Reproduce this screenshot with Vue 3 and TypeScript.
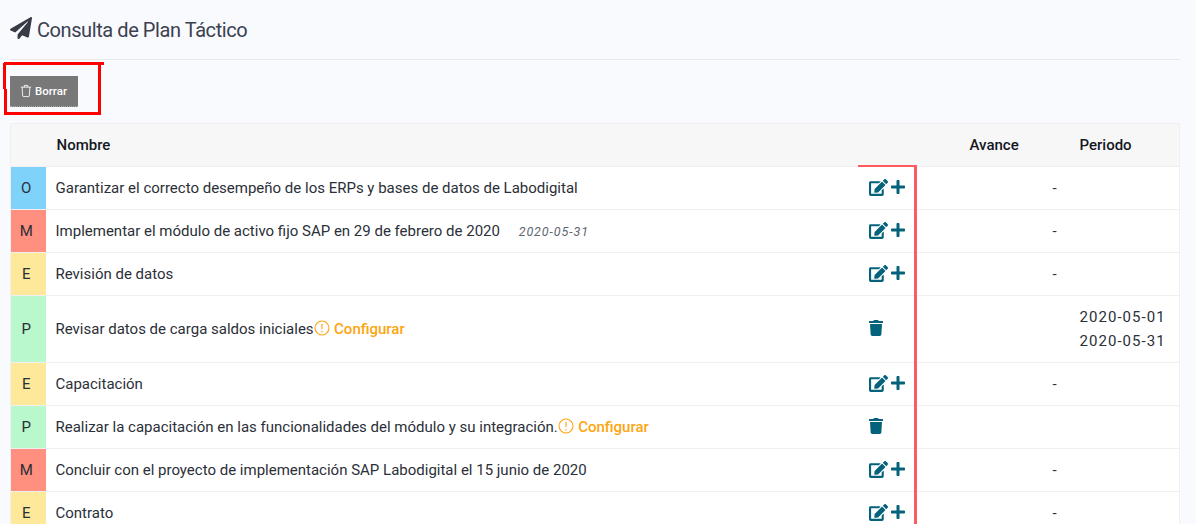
<script setup lang="ts">
interface Row {
  tipo: string;
  color: string;
  nombre: string;
  fecha?: string;
  configurar?: boolean;
  avance?: string;
  periodo?: string[];
  tall?: boolean;
}

const rows: Row[] = [
  { tipo: 'O', color: '#7fd3fb', nombre: 'Garantizar el correcto desempeño de los ERPs y bases de datos de Labodigital', avance: '-' },
  { tipo: 'M', color: '#ff8f7e', nombre: 'Implementar el módulo de activo fijo SAP en 29 de febrero de 2020', fecha: '2020-05-31', avance: '-' },
  { tipo: 'E', color: '#fee89a', nombre: 'Revisión de datos', avance: '-' },
  { tipo: 'P', color: '#b9f8cc', nombre: 'Revisar datos de carga saldos iniciales', configurar: true, periodo: ['2020-05-01', '2020-05-31'], tall: true },
  { tipo: 'E', color: '#fee89a', nombre: 'Capacitación', avance: '-' },
  { tipo: 'P', color: '#b9f8cc', nombre: 'Realizar la capacitación en las funcionalidades del módulo y su integración.', configurar: true },
  { tipo: 'M', color: '#ff8f7e', nombre: 'Concluir con el proyecto de implementación SAP Labodigital el 15 junio de 2020', avance: '-' },
  { tipo: 'E', color: '#fee89a', nombre: 'Contrato', avance: '-' }
];
</script>

<template>
  <div class="page">
    <header class="page-title">
      <svg class="plane" viewBox="0 0 512 512" aria-hidden="true">
        <path d="M476 3.2L12.5 270.6c-18.1 10.4-15.8 35.6 2.2 43.2L121 358.4l287.3-253.2c5.5-4.9 13.3 2.6 8.6 8.3L176 407v80.5c0 23.6 28.5 32.9 42.5 15.8L282 426l124.6 52.2c14.2 6 30.4-2.9 33-18.2l72-432C515 7.8 493.3-6.8 476 3.2z" />
      </svg>
      <h1>Consulta de Plan Táctico</h1>
    </header>

    <div class="toolbar">
      <button class="btn-borrar" type="button">
        <svg class="trash-line" viewBox="0 0 14 16" aria-hidden="true">
          <path d="M1 3.5h12M5 3.5V1.5h4v2M2.5 3.5l.6 10.2c0 .5.4.8.8.8h6.2c.4 0 .8-.3.8-.8l.6-10.2" />
        </svg>
        Borrar
      </button>
      <span class="mark mark-box"></span>
      <span class="mark mark-tail"></span>
    </div>

    <div class="table-wrap">
      <table>
        <colgroup>
          <col class="c-tipo" />
          <col />
          <col class="c-acciones" />
          <col class="c-avance" />
          <col class="c-periodo" />
        </colgroup>
        <thead>
          <tr>
            <th></th>
            <th>Nombre</th>
            <th></th>
            <th class="th-flush">Avance</th>
            <th class="th-flush">Periodo</th>
          </tr>
        </thead>
        <tbody>
          <tr v-for="row in rows" :key="row.nombre" :class="{ tall: row.tall }">
            <td class="tipo" :style="{ background: row.color }">{{ row.tipo }}</td>
            <td class="nombre">
              {{ row.nombre }}
              <em v-if="row.fecha">{{ row.fecha }}</em>
              <span v-if="row.configurar" class="config">
                <svg viewBox="0 0 16 16" aria-hidden="true">
                  <circle cx="8" cy="8" r="7" />
                  <path d="M8 3.8v5.4M8 11v1.4" />
                </svg>
                Configurar
              </span>
            </td>
            <td class="acciones">
              <template v-if="row.configurar">
                <svg class="ic-trash" viewBox="0 0 448 512" aria-hidden="true">
                  <path d="M432 32H312l-9.4-18.7A24 24 0 0 0 281.1 0H166.8a23.72 23.72 0 0 0-21.4 13.3L136 32H16A16 16 0 0 0 0 48v32a16 16 0 0 0 16 16h416a16 16 0 0 0 16-16V48a16 16 0 0 0-16-16zM53.2 467a48 48 0 0 0 47.9 45h245.8a48 48 0 0 0 47.9-45L416 128H32z" />
                </svg>
              </template>
              <template v-else>
                <svg class="ic-edit" viewBox="0 0 576 512" aria-hidden="true">
                  <path d="M402.6 83.2l90.2 90.2c3.8 3.8 3.8 10 0 13.8L274.4 405.6l-92.8 10.3c-12.4 1.4-22.9-9.1-21.5-21.5l10.3-92.8L388.8 83.2c3.8-3.8 10-3.8 13.8 0zm162-22.9l-48.8-48.8c-15.2-15.2-39.9-15.2-55.2 0l-35.4 35.4c-3.8 3.8-3.8 10 0 13.8l90.2 90.2c3.8 3.8 10 3.8 13.8 0l35.4-35.4c15.2-15.3 15.2-40 0-55.2zM384 346.2V448H64V128h229.8c3.2 0 6.2-1.3 8.5-3.5l40-40c7.6-7.6 2.2-20.5-8.5-20.5H48C21.5 64 0 85.5 0 112v352c0 26.5 21.5 48 48 48h352c26.5 0 48-21.5 48-48V306.2c0-10.7-12.9-16-20.5-8.5l-40 40c-2.2 2.3-3.5 5.3-3.5 8.5z" />
                </svg>
                <svg class="ic-plus" viewBox="0 0 448 512" aria-hidden="true">
                  <path d="M416 208H272V64c0-17.67-14.33-32-32-32h-32c-17.67 0-32 14.33-32 32v144H32c-17.67 0-32 14.33-32 32v32c0 17.67 14.33 32 32 32h144v144c0 17.67 14.33 32 32 32h32c17.67 0 32-14.33 32-32V304h144c17.67 0 32-14.33 32-32v-32c0-17.67-14.33-32-32-32z" />
                </svg>
              </template>
            </td>
            <td class="avance">{{ row.avance }}</td>
            <td class="periodo">
              <div v-for="fecha in row.periodo" :key="fecha">{{ fecha }}</div>
            </td>
          </tr>
        </tbody>
      </table>
      <span class="mark mark-top"></span>
      <span class="mark mark-side"></span>
    </div>
  </div>
</template>

<style>
html,
body {
  margin: 0;
  height: 524px;
  overflow: hidden;
  background: #f9fafd;
}
</style>

<style scoped>
.page {
  height: 524px;
  overflow: hidden;
  padding-left: 10px;
  padding-right: 16px;
  box-sizing: border-box;
  font-family: Roboto, 'Noto Sans', sans-serif;
  font-size: 15px;
  color: #2b2f38;
}

.page-title {
  display: flex;
  align-items: center;
  gap: 5px;
  height: 59px;
  border-bottom: 1px solid #e6e8ec;
}

.plane {
  width: 22px;
  height: 22px;
  margin-bottom: 4px;
  fill: #363b44;
}

h1 {
  margin: 0;
  font-size: 20px;
  font-weight: 400;
  letter-spacing: -0.42px;
  color: #3a4150;
}

.toolbar {
  position: relative;
  height: 63px;
  padding-top: 16px;
  box-sizing: border-box;
}

.btn-borrar {
  display: flex;
  align-items: center;
  gap: 3px;
  width: 68px;
  height: 31px;
  padding: 0 0 0 10px;
  border: 0;
  border-bottom: 1px dotted #a9a9a9;
  background: #787878;
  color: #fff;
  font-family: inherit;
  font-size: 11.5px;
  font-weight: 500;
}

.trash-line {
  width: 12px;
  height: 14px;
  fill: none;
  stroke: #fff;
  stroke-width: 1;
}

.mark {
  position: absolute;
  pointer-events: none;
}

.mark-box {
  left: -6px;
  top: 2px;
  width: 94px;
  height: 47px;
  border-top: 3px solid #ff0000;
  border-right: 3px solid #ff0000;
  border-bottom: 3px solid #ff0000;
}

.mark-box::before {
  content: '';
  position: absolute;
  top: -3px;
  right: -6px;
  width: 6px;
  height: 3px;
  background: #ff0000;
}

.mark-tail {
  left: -7px;
  top: 3px;
  width: 3px;
  height: 26px;
  background: #ff0000;
  box-shadow: 1px 26px 0 #ff0000;
}

.table-wrap {
  position: relative;
}

table {
  width: 100%;
  border-collapse: collapse;
  table-layout: fixed;
  background: #fff;
  border: 1px solid #f0f0f0;
}

.c-tipo {
  width: 35px;
}

.c-acciones {
  width: 112px;
}

.c-avance {
  width: 110px;
}

.c-periodo {
  width: 100px;
}

th {
  height: 42px;
  padding: 0 10px 0 11px;
  text-align: left;
  font-size: 15px;
  font-weight: 500;
  color: #15181f;
  background: #f7f7f8;
  border-bottom: 1px solid #f0f0f0;
}

th.th-flush {
  padding-left: 0;
}

td {
  box-sizing: border-box;
  height: 43px;
  padding: 0 10px;
  border-bottom: 1px solid #f0f0f0;
}

tr.tall td {
  height: 67px;
}

.tipo {
  padding: 0 4px 0 0;
  text-align: center;
}

em {
  margin-left: 15px;
  font-size: 12.5px;
  letter-spacing: 0.9px;
  color: #5f6670;
}

.config {
  margin-left: -3px;
  color: #fda50f;
  font-weight: 500;
}

.config svg {
  width: 16px;
  height: 16px;
  vertical-align: -2px;
  fill: none;
  stroke: #fda50f;
  stroke-width: 1.1;
}

.acciones {
  padding: 0 0 2px 11px;
  line-height: 0;
}

.acciones svg {
  fill: #04637b;
  vertical-align: middle;
}

.ic-edit {
  width: 19px;
  height: 17px;
}

.ic-plus {
  width: 14px;
  height: 16px;
  margin-left: 3px;
}

.ic-trash {
  width: 14px;
  height: 16px;
}

.avance {
  padding: 0 0 0 83px;
}

.periodo {
  line-height: 24px;
  padding-left: 0;
  letter-spacing: 1.05px;
}

.mark-top {
  left: 848px;
  top: 42px;
  width: 59px;
  height: 2px;
  background: #ff5a5f;
}

.mark-side {
  left: 904px;
  top: 42px;
  width: 3px;
  height: 400px;
  background: #ff5a5f;
}
</style>
